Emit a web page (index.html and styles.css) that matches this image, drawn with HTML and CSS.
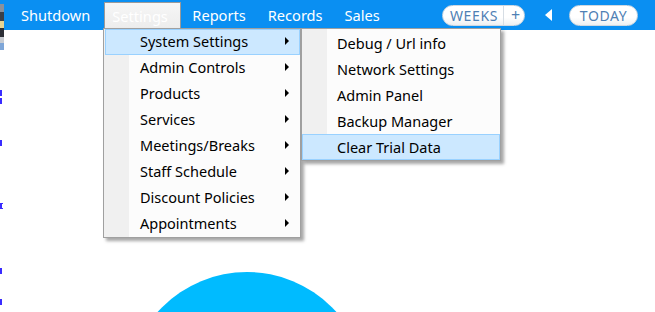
FILE: index.html
```html
<!DOCTYPE html>
<html lang="en">
<head>
    <meta charset="UTF-8">
    <title>Settings menu</title>
    <link rel="stylesheet" href="styles.css">
</head>
<body>
    <div class="edge">
        <span class="edge-dark"></span>
        <span class="edge-mark m1"></span>
        <span class="edge-mark m2"></span>
        <span class="edge-mark m3"></span>
        <span class="edge-mark m4"></span>
        <span class="edge-mark m5"></span>
        <span class="edge-mark m6"></span>
    </div>
    <div class="topbar">
        <a class="nav shutdown">Shutdown</a>
        <a class="nav open">Settings</a>
        <a class="nav reports">Reports</a>
        <a class="nav records">Records</a>
        <a class="nav sales">Sales</a>
        <div class="pill weeks"><span class="label">WEEKS</span><span class="plus">+</span></div>
        <span class="prev"></span>
        <div class="pill today">TODAY</div>
    </div>

    <div class="menu main-menu">
        <div class="item active">System Settings<span class="arrow"></span></div>
        <div class="item">Admin Controls<span class="arrow"></span></div>
        <div class="item">Products<span class="arrow"></span></div>
        <div class="item">Services<span class="arrow"></span></div>
        <div class="item">Meetings/Breaks<span class="arrow"></span></div>
        <div class="item">Staff Schedule<span class="arrow"></span></div>
        <div class="item">Discount Policies<span class="arrow"></span></div>
        <div class="item">Appointments<span class="arrow"></span></div>
    </div>

    <div class="menu sub-menu">
        <div class="item">Debug / Url info</div>
        <div class="item">Network Settings</div>
        <div class="item">Admin Panel</div>
        <div class="item">Backup Manager</div>
        <div class="item active">Clear Trial Data</div>
    </div>

    <div class="content">
        <div class="circle"></div>
    </div>
</body>
</html>
```

FILE: styles.css
```css
html, body {
    margin: 0;
    padding: 0;
    height: 100%;
    overflow: hidden;
    background-color: #fff;
    font-family: "Noto Sans", "Open Sans", sans-serif;
}
.topbar {
    height: 30px;
    background-color: #0a8ff2;
    display: flex;
    align-items: center;
    padding-left: 21px;
}
.nav {
    color: #fff;
    font-size: 14.6px;
    line-height: 30px;
}
.shutdown { margin-right: 14px; }
.reports { margin-right: 22px; }
.records { margin-right: 22px; }
.nav.open {
    background: linear-gradient(#f6f6f6, #ececec);
    border: 1px solid #9a9a9a;
    border-bottom: none;
    align-self: flex-end;
    height: 28px;
    line-height: 26px;
    width: 77px;
    padding-left: 7px;
    margin-right: 11px;
    box-sizing: border-box;
}
.pill {
    background: linear-gradient(#ffffff 60%, #eef0f2);
    border: 1px solid #cfd8e0;
    border-radius: 11px;
    height: 21px;
    box-sizing: border-box;
    color: #4f80b4;
    font-size: 14px;
    letter-spacing: 0.6px;
    display: flex;
    align-items: center;
}
.weeks {
    margin-left: auto;
    width: 83px;
}
.weeks .label {
    padding-left: 7px;
    width: 53px;
}
.weeks .plus {
    border-left: 1px solid #d6dde4;
    padding-left: 7px;
    font-size: 16px;
    line-height: 19px;
}
.prev {
    width: 0;
    height: 0;
    border-top: 6px solid transparent;
    border-bottom: 6px solid transparent;
    border-right: 7px solid #fff;
    margin-left: 20px;
}
.today {
    margin-left: 17px;
    margin-right: 17px;
    width: 69px;
    justify-content: center;
}
.edge {
    position: absolute;
    left: 0;
    top: 0;
    width: 4px;
    height: 100%;
    z-index: 3;
}
.edge-dark {
    position: absolute;
    top: 4px;
    left: 0;
    width: 4px;
    height: 46px;
    background: linear-gradient(#8a919c 0 18%, #3c4048 18% 38%, #e6d494 38% 52%, #2c2f36 52% 72%, #c8ccd2 72% 84%, #7ea6d8 84%);
}
.edge-mark {
    position: absolute;
    left: 0;
    width: 3px;
    height: 6px;
    border-left: 2px solid #3a2cff;
    box-sizing: border-box;
}
.m1 { top: 90px; }
.m2 { top: 98px; }
.m3 { top: 140px; }
.m4 { top: 203px; border-top: 1px solid #3a2cff; border-bottom: 1px solid #3a2cff; }
.m5 { top: 268px; }
.m6 { top: 299px; }

.menu {
    position: absolute;
    top: 28px;
    background: linear-gradient(to right, #f0f0f0 0 25px, #fcfcfc 25px);
    border: 1px solid #a0a0a0;
    box-shadow: 3px 3px 3px rgba(0,0,0,0.35);
    font-size: 14.5px;
    color: #000;
    z-index: 2;
}
.main-menu {
    left: 103px;
    width: 195px;
    padding-left: 1px;
}
.sub-menu {
    left: 301px;
    width: 198px;
    padding-top: 1px;
}
.item {
    height: 24px;
    line-height: 22px;
    padding-left: 34px;
    border: 1px solid transparent;
    position: relative;
    white-space: nowrap;
}
.sub-menu .item {
    line-height: 24px;
}
.item.active {
    background-color: #cce8ff;
    border-color: #99d1ff;
}
.arrow {
    position: absolute;
    right: 10px;
    top: 7px;
    width: 0;
    height: 0;
    border-top: 4px solid transparent;
    border-bottom: 4px solid transparent;
    border-left: 4px solid #000;
}
.content {
    height: 282px;
    overflow: hidden;
    padding-left: 127px;
    box-sizing: border-box;
    padding-top: 242px;
}
.circle {
    width: 240px;
    height: 240px;
    border-radius: 50%;
    background-color: #00bbff;
}
```
